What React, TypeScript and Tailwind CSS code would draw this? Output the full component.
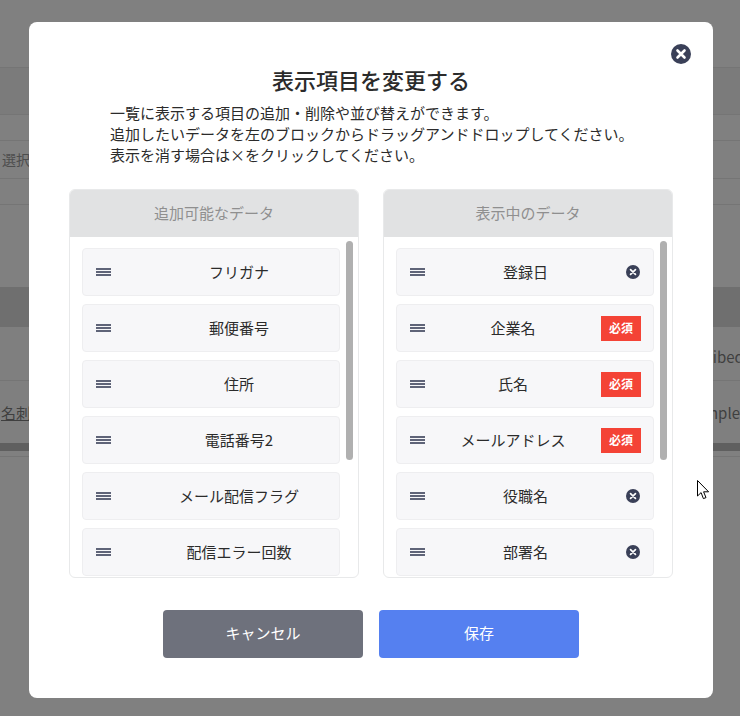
import { ReactNode } from "react";

const FONT = "font-['Noto_Sans_CJK_JP','Noto_Sans',sans-serif]";

const leftItems = ["フリガナ", "郵便番号", "住所", "電話番号2", "メール配信フラグ", "配信エラー回数"];

const rightItems = [
  { label: "登録日", required: false },
  { label: "企業名", required: true },
  { label: "氏名", required: true },
  { label: "メールアドレス", required: true },
  { label: "役職名", required: false },
  { label: "部署名", required: false },
];

function CloseIcon({ size, stroke }: { size: number; stroke: number }) {
  return (
    <svg width={size} height={size} viewBox="0 0 20 20" className="shrink-0">
      <circle cx="10" cy="10" r="10" fill="#3a4058" />
      <path d="M6.5 6.5l7 7M13.5 6.5l-7 7" stroke="#fff" strokeWidth={stroke} strokeLinecap="round" />
    </svg>
  );
}

function Handle() {
  return (
    <div className="flex w-[15px] shrink-0 flex-col gap-[1.5px]">
      <div className="h-[1.5px] bg-[#5f6478]" />
      <div className="h-[1.5px] bg-[#5f6478]" />
      <div className="h-[1.5px] bg-[#5f6478]" />
    </div>
  );
}

function Panel({ title, children }: { title: string; children: ReactNode }) {
  return (
    <div className="relative flex h-[389px] w-[290px] flex-col overflow-hidden rounded-md border border-[#e8e9ea] bg-white">
      <div className="flex h-[47px] shrink-0 items-center justify-center bg-[#e1e2e3] text-[15px] text-[#8f8f8f]">
        {title}
      </div>
      <div className="flex flex-col gap-2 pl-3 pt-[11px]">{children}</div>
      <div className="absolute left-[276px] top-[51px] h-[219px] w-[7px] rounded-full bg-[#b0b0b0]" />
    </div>
  );
}

function Item({ children }: { children: ReactNode }) {
  return (
    <div className="flex h-12 w-[258px] shrink-0 items-center rounded border border-[#eeeef0] bg-[#f7f7f9] pl-[13px] pr-[13px] text-[15px] text-[#2b2b2b]">
      {children}
    </div>
  );
}

function BackgroundRow({ className, children }: { className: string; children?: ReactNode }) {
  return <div className={`w-[740px] shrink-0 overflow-hidden whitespace-nowrap ${className}`}>{children}</div>;
}

export default function App() {
  return (
    <div className={`relative h-[716px] w-[740px] overflow-hidden bg-[#808080] ${FONT}`}>
      {/* page behind the dialog */}
      <div className="flex h-full flex-col text-[15px] text-[#3f3f3f]">
        <BackgroundRow className="h-[67px]" />
        <BackgroundRow className="h-[48px] border-y border-[#757575] bg-[#7b7b7b]" />
        <BackgroundRow className="h-[25px]" />
        <BackgroundRow className="flex h-[39px] items-center border-y border-[#757575] pl-[2px] text-[14px] text-[#4d4d4d]">選択</BackgroundRow>
        <BackgroundRow className="h-[26px] border-b border-[#757575]" />
        <BackgroundRow className="h-[82px]" />
        <BackgroundRow className="h-[40px] bg-[#6f6f6f]" />
        <BackgroundRow className="flex h-[54px] items-center border-b border-[#757575] bg-[#7f7f7f] pl-[665px] pt-[8px]">Subscribed</BackgroundRow>
        <BackgroundRow className="flex h-[62px] items-center bg-[#7f7f7f] pl-[1px] pt-[3px]">
          <span className="w-[691px] underline">名刺</span>
          <span>Sample</span>
        </BackgroundRow>
        <BackgroundRow className="h-[8px] bg-[#5f5f5f]" />
        <BackgroundRow className="h-[6px] border-b border-[#757575]" />
      </div>

      {/* dialog */}
      <div className="absolute inset-0 pl-[29px] pt-[22px]">
        <div className="relative flex h-[676px] w-[684px] flex-col items-center rounded-lg bg-white pt-[41px]">
          <button className="absolute right-[22px] top-[22px]">
            <CloseIcon size={20} stroke={2.6} />
          </button>
          <h2 className="text-[22px] font-medium leading-[32px] text-[#2b2b2b]">表示項目を変更する</h2>
          <p className="mt-[7px] w-[522px] whitespace-nowrap text-[15px] leading-[21px] text-[#2b2b2b]">
            一覧に表示する項目の追加・削除や並び替えができます。
            <br />
            追加したいデータを左のブロックからドラッグアンドドロップしてください。
            <br />
            表示を消す場合は×をクリックしてください。
          </p>
          <div className="mt-[24px] flex gap-6">
            <Panel title="追加可能なデータ">
              {leftItems.map((label) => (
                <Item key={label}>
                  <Handle />
                  <span className="flex-1 pl-[41px] pt-px text-center">{label}</span>
                </Item>
              ))}
            </Panel>
            <Panel title="表示中のデータ">
              {rightItems.map((item) => (
                <Item key={item.label}>
                  <Handle />
                  <span className="flex-1 pt-px text-center">{item.label}</span>
                  {item.required ? (
                    <span className="-mr-px flex h-[25px] w-10 items-center justify-center bg-[#f44336] text-[12px] font-bold text-white">
                      必須
                    </span>
                  ) : (
                    <CloseIcon size={14} stroke={2.4} />
                  )}
                </Item>
              ))}
            </Panel>
          </div>
          <div className="mt-8 flex gap-4">
            <button className="h-12 w-[200px] rounded bg-[#6e717c] pb-px text-[15px] text-white">キャンセル</button>
            <button className="h-12 w-[200px] rounded bg-[#5580f0] pb-px text-[15px] text-white">保存</button>
          </div>
        </div>
      </div>

      {/* mouse pointer */}
      <svg width="14" height="21" viewBox="0 0 14 21" className="absolute left-[697px] top-[480px]">
        <path d="M.5.5v15.5l3.6-3.4 2.3 6 2.6-1-2.4-5.8h5z" fill="#fff" stroke="#000" strokeWidth="1" />
      </svg>
    </div>
  );
}
